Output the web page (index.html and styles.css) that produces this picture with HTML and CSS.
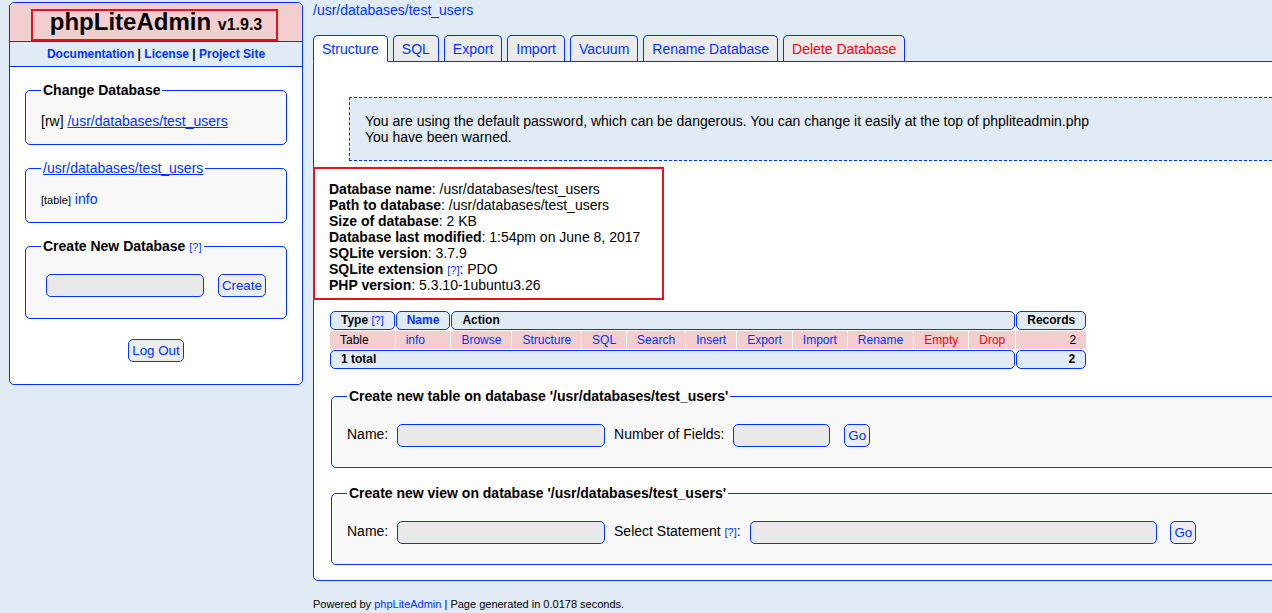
FILE: index.html
```html
<!DOCTYPE html>
<html>
<head>
<meta charset="utf-8">
<title>phpLiteAdmin</title>
<link rel="stylesheet" href="styles.css">
</head>
<body>
<div class="page">
  <div class="sidebar">
    <h1 class="title"><a href="#" class="title-link">phpLiteAdmin</a> <span class="version">v1.9.3</span></h1>
    <span class="annot-title"></span>
    <div class="links"><a href="#">Documentation</a> | <a href="#">License</a> | <a href="#">Project Site</a></div>
    <fieldset class="side-fs">
      <legend class="lg">Change Database</legend>
      [rw] <a class="u" href="#">/usr/databases/test_users</a>
    </fieldset>
    <fieldset class="side-fs">
      <legend class="lg-link"><a class="u" href="#">/usr/databases/test_users</a></legend>
      <span class="small">[table]</span> <a href="#">info</a>
    </fieldset>
    <fieldset class="side-fs side-fs-create">
      <legend class="lg">Create New Database <a href="#" class="helpq">[?]</a></legend>
      <input class="in in-side" type="text"> <button class="btn">Create</button>
    </fieldset>
    <div class="logout"><button class="btn">Log Out</button></div>
  </div>

  <div class="content">
    <a class="dbpath" href="#">/usr/databases/test_users</a>
    <div class="tabs">
      <a href="#" class="tab tab-active">Structure</a>
      <a href="#" class="tab">SQL</a>
      <a href="#" class="tab">Export</a>
      <a href="#" class="tab">Import</a>
      <a href="#" class="tab">Vacuum</a>
      <a href="#" class="tab">Rename Database</a>
      <a href="#" class="tab tab-warn">Delete Database</a>
    </div>
    <div class="main">
      <div class="confirm">
        You are using the default password, which can be dangerous. You can change it easily at the top of phpliteadmin.php<br>
        You have been warned.
      </div>
      <div class="dbinfo">
        <b>Database name</b>: /usr/databases/test_users<br>
        <b>Path to database</b>: /usr/databases/test_users<br>
        <b>Size of database</b>: 2 KB<br>
        <b>Database last modified</b>: 1:54pm on June 8, 2017<br>
        <b>SQLite version</b>: 3.7.9<br>
        <b>SQLite extension</b> <a href="#" class="helpq">[?]</a>: PDO<br>
        <b>PHP version</b>: 5.3.10-1ubuntu3.26
      </div>
      <table class="struct">
        <tr>
          <td class="th">Type <a href="#" class="helpq">[?]</a></td>
          <td class="th"><a href="#">Name</a></td>
          <td class="th" colspan="10">Action</td>
          <td class="th">Records</td>
        </tr>
        <tr>
          <td class="td">Table</td>
          <td class="td"><a href="#">info</a></td>
          <td class="td act"><a href="#">Browse</a></td>
          <td class="td act"><a href="#">Structure</a></td>
          <td class="td act"><a href="#">SQL</a></td>
          <td class="td act"><a href="#">Search</a></td>
          <td class="td act"><a href="#">Insert</a></td>
          <td class="td act"><a href="#">Export</a></td>
          <td class="td act"><a href="#">Import</a></td>
          <td class="td act"><a href="#">Rename</a></td>
          <td class="td act"><a href="#" class="warn">Empty</a></td>
          <td class="td act"><a href="#" class="warn">Drop</a></td>
          <td class="td num">2</td>
        </tr>
        <tr>
          <td class="th" colspan="12">1 total</td>
          <td class="th num">2</td>
        </tr>
      </table>
      <fieldset class="main-fs">
        <legend class="lg">Create new table on database '/usr/databases/test_users'</legend>
        Name: <input class="in in-name" type="text"> Number of Fields: <input class="in in-fields" type="text"> <button class="btn">Go</button>
      </fieldset>
      <fieldset class="main-fs main-fs2">
        <legend class="lg">Create new view on database '/usr/databases/test_users'</legend>
        Name: <input class="in in-name" type="text"> Select Statement <a href="#" class="helpq">[?]</a>: <input class="in in-select" type="text"> <button class="btn">Go</button>
      </fieldset>
    </div>
    <div class="footer">Powered by <a href="#">phpLiteAdmin</a> | Page generated in 0.0178 seconds.</div>
  </div>
</div>
</body>
</html>
```

FILE: styles.css
```css
html {
  overflow: hidden;
}
body {
  margin: 0;
  padding: 2px 0 0 9px;
  background: #e0ebf6;
  color: #000;
  font-family: "Liberation Sans", Arial, sans-serif;
  font-size: 14px;
  line-height: 16px;
}
a {
  color: #03f;
  text-decoration: none;
}
a.u {
  text-decoration: underline;
}
.warn, .tab-warn {
  color: #f00;
}
.page {
  display: flex;
  align-items: flex-start;
}

/* sidebar */
.sidebar {
  position: relative;
  flex: none;
  box-sizing: border-box;
  width: 294px;
  background: #fff;
  border: 1px solid #03f;
  border-radius: 5px;
  padding-bottom: 17px;
}
.title {
  margin: 0;
  padding: 5px;
  font-size: 24px;
  line-height: 28px;
  font-weight: bold;
  text-align: center;
  background: #f3cece;
  border-radius: 4px 4px 0 0;
}
.title-link {
  color: #000;
}
.version {
  font-size: 16px;
  line-height: 16px;
}
.annot-title {
  position: absolute;
  left: 21px;
  top: 6px;
  width: 247px;
  height: 32px;
  box-sizing: border-box;
  border: 2px solid #e3141f;
}
.links {
  background: #e0ebf6;
  border-top: 1px solid #03f;
  border-bottom: 1px solid #03f;
  padding: 5px 0;
  font-size: 12px;
  line-height: 14px;
  font-weight: bold;
  text-align: center;
}
.side-fs {
  margin: 15px 15px 0;
  padding: 15px;
  border: 1px solid #03f;
  border-radius: 5px;
  background: #f8f8f8;
  min-width: 0;
}
.side-fs-create {
  padding-bottom: 16px;
}
.lg {
  padding: 0 2px;
  font-weight: bold;
  font-size: 14px;
  line-height: 16px;
}
.lg-link {
  padding: 0 2px;
  line-height: 16px;
}
.helpq {
  font-size: 11px;
  font-weight: normal;
  line-height: 12px;
}
.small {
  font-size: 11px;
  line-height: 12px;
}
.logout {
  margin-top: 15px;
  text-align: center;
}

/* form controls */
.in, .btn {
  box-sizing: border-box;
  height: 23px;
  margin: 5px;
  padding: 3px;
  border: 1px solid #03f;
  border-radius: 5px;
  background: #e9e9e9;
  color: #03f;
  font-family: "Liberation Sans", Arial, sans-serif;
  font-size: 13.333px;
  line-height: 15px;
  vertical-align: middle;
}
.btn {
  background: #ececec;
}
.in-side {
  width: 158px;
}
.in-name {
  width: 208px;
}
.in-fields {
  width: 97px;
}
.in-select {
  width: 407px;
}

/* content */
.content {
  flex: none;
  width: 1100px;
  margin-left: 10px;
}
.dbpath {
  display: block;
}
.tabs {
  display: flex;
  align-items: flex-end;
  margin-top: 17px;
}
.tab {
  padding: 5px 8px 4px;
  margin-right: 5px;
  border: 1px solid #03f;
  border-bottom: 0;
  border-radius: 5px 5px 0 0;
  background: #ebebeb;
}
.tab-active {
  position: relative;
  z-index: 1;
  background: #fff;
  border-bottom: 1px solid #fff;
  margin-bottom: -1px;
}
.main {
  background: #fff;
  border: 1px solid #03f;
  border-radius: 0 5px 5px 5px;
  padding: 15px;
}
.confirm {
  margin: 20px;
  padding: 15px;
  border: 1px dashed #03f;
  background: #e0ebf6;
}
.dbinfo {
  box-sizing: border-box;
  width: 351px;
  margin: -14px 0 -7px -16px;
  padding: 12px 0 5px 14px;
  border: 2px solid #e3141f;
}
.struct {
  border-collapse: separate;
  border-spacing: 1px;
  margin-top: 17px;
  font-size: 12px;
}
.th {
  border: 1px solid #03f;
  border-radius: 5px;
  background: #e0ebf6;
  padding: 0 10px;
  font-weight: bold;
  line-height: 17px;
  text-align: left;
}
.td {
  background: #f3cece;
  padding: 0 10px;
  line-height: 18px;
  text-align: left;
}
.td.act {
  text-align: center;
}
.num, .td.num, .th.num {
  text-align: right;
}
.main-fs {
  margin: 18px 2px 0;
  padding: 15px;
  border: 1px solid #03f;
  border-radius: 5px;
  background: #f8f8f8;
  min-width: 0;
}
.main-fs2 {
  margin-top: 17px;
}
.footer {
  margin-top: 17px;
  font-size: 11px;
  line-height: 13px;
}
```
